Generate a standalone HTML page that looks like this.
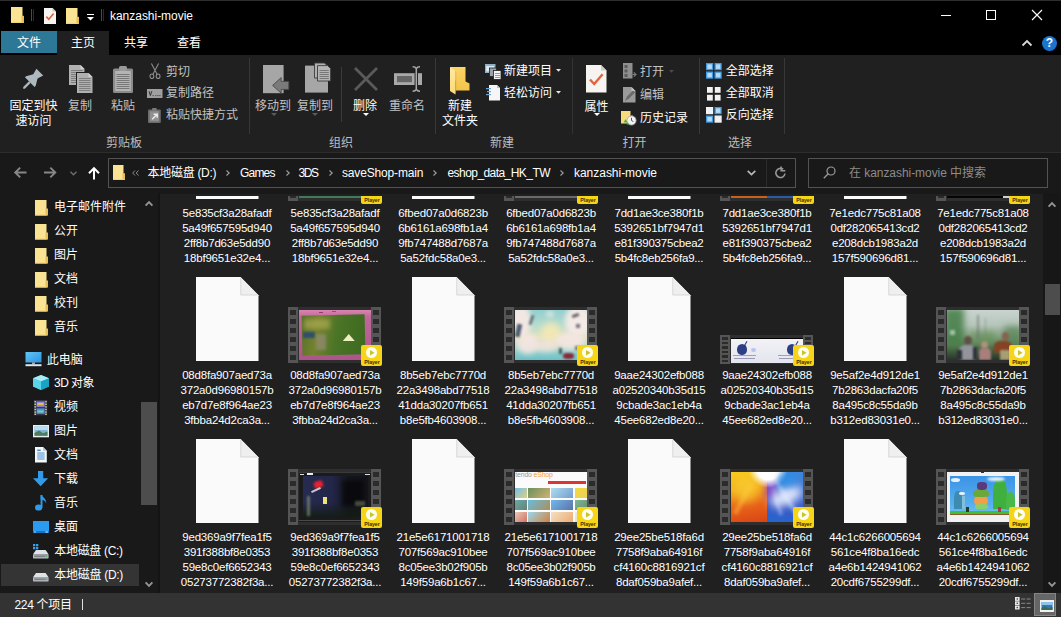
<!DOCTYPE html><html lang="zh-CN"><head><meta charset="utf-8"><title>kanzashi-movie</title><style>
html,body{margin:0;padding:0;}
body{width:1061px;height:617px;overflow:hidden;background:#202020;position:relative;
 font-family:"Liberation Sans","Noto Sans CJK SC",sans-serif;font-size:12px;color:#fff;}
.a{position:absolute;}
.t{position:absolute;white-space:nowrap;line-height:16px;height:16px;}
.g{color:#c2c2c2;}
.fn{position:absolute;width:108px;text-align:center;white-space:nowrap;line-height:15px;font-size:11.5px;letter-spacing:-0.2px;color:#fff;}
svg{position:absolute;overflow:visible;}
</style></head><body>
<div class="a" style="left:0px;top:0px;width:1061px;height:55px;background:#000;"></div>
<div class="a" style="left:0px;top:0px;width:1061px;height:1px;background:#2e2e2e;"></div>
<div class="a" style="left:0px;top:55px;width:1061px;height:97px;background:#202020;"></div>
<div class="a" style="left:0px;top:152px;width:1061px;height:1px;background:#2d2d2d;"></div>
<div class="a" style="left:0px;top:153px;width:1061px;height:41px;background:#191919;"></div>
<div class="a" style="left:0px;top:193px;width:159px;height:400px;background:#191919;"></div>
<div class="a" style="left:159px;top:194px;width:884px;height:399px;background:#202020;"></div>
<div class="a" style="left:1043px;top:193px;width:18px;height:400px;background:#171717;"></div>
<div class="a" style="left:0px;top:593px;width:1061px;height:24px;background:#333333;"></div>
<svg style="left:11px;top:7px" width="13" height="16" viewBox="0 0 13 16"><rect x="0" y="0" width="11.5" height="16" fill="#fbe394"/><rect x="10.5" y="8.8" width="2.5" height="7.2" fill="#e9bf55"/><rect x="0" y="15" width="11.5" height="1" fill="#f3d374"/></svg>
<div class="a" style="left:31px;top:9px;width:1px;height:12px;background:#4a4a4a;"></div>
<div class="a" style="left:33px;top:9px;width:1px;height:12px;background:#2a2a2a;"></div>
<svg style="left:44px;top:8px" width="12" height="16" viewBox="0 0 12 16"><path d="M0 0H8.5L12 3.5V16H0Z" fill="#f7f3f0"/><path d="M8.5 0V3.5H12Z" fill="#c9c4c0"/><path d="M2.3 8.6L4.8 11.2L9.6 5.6" fill="none" stroke="#e0623a" stroke-width="1.6"/></svg>
<svg style="left:66px;top:8px" width="13" height="16" viewBox="0 0 13 16"><rect x="0" y="0" width="11.5" height="16" fill="#fbe394"/><rect x="10.5" y="8.8" width="2.5" height="7.2" fill="#e9bf55"/><rect x="0" y="15" width="11.5" height="1" fill="#f3d374"/></svg>
<div class="a" style="left:87px;top:14px;width:7px;height:1px;background:#fff;"></div>
<svg style="left:87px;top:17px" width="7" height="4" viewBox="0 0 7 4"><path d="M0 0H7L3.5 3.6Z" fill="#fff"/></svg>
<div class="a" style="left:101px;top:9px;width:1px;height:12px;background:#4a4a4a;"></div>
<div class="a" style="left:103px;top:9px;width:1px;height:12px;background:#2a2a2a;"></div>
<span id="t0" class="t " style="left:110px;top:7.5px;letter-spacing:-0.029px;">kanzashi-movie</span>
<div class="a" style="left:941px;top:15px;width:10px;height:1px;background:#fff;"></div>
<div class="a" style="left:986px;top:10px;width:8px;height:8px;border:1px solid #fff"></div>
<svg style="left:1032px;top:10px" width="10" height="10" viewBox="0 0 10 10"><path d="M0 0L10 10M10 0L0 10" stroke="#fff" stroke-width="1.1" fill="none"/></svg>
<div class="a" style="left:1px;top:31px;width:56px;height:22px;background:#2c7896;"></div>
<div class="a" style="left:57px;top:31px;width:52px;height:24px;background:#202020;"></div>
<span id="t1" class="t " style="left:17px;top:35px;">文件</span>
<span id="t2" class="t " style="left:71px;top:35px;">主页</span>
<span id="t3" class="t " style="left:124px;top:35px;">共享</span>
<span id="t4" class="t " style="left:177px;top:35px;">查看</span>
<svg style="left:1022px;top:40px" width="10" height="6" viewBox="0 0 10 6"><path d="M0.5 5.5L5 1L9.5 5.5" stroke="#d8d8d8" stroke-width="1.8" fill="none"/></svg>
<div class="a" style="left:1041.5px;top:35.5px;width:15px;height:15px;border-radius:50%;background:#1b74cf;"></div>
<span id="t5" class="t " style="left:1045.7px;top:35px;font-weight:bold;font-size:12px;color:#fff;">?</span>
<svg style="left:0px;top:0px" width="1" height="1" viewBox="0 0 1 1"><g transform="translate(39.8,72.1) rotate(45)" fill="#adb9bf"><path d="M-4.8 0H4.8L3 6.2L6.8 12.6V14.2H-6.8V12.6L-3 6.2Z"/><path d="M-1.1 14.2H1.1V22.3L0 23.6L-1.1 22.3Z"/></g></svg>
<span id="t6" class="t " style="left:9.5px;top:98.2px;">固定到快</span>
<span id="t7" class="t " style="left:15.5px;top:113.2px;">速访问</span>
<svg style="left:69px;top:65px" width="15.5" height="20" viewBox="0 0 15.5 20"><path d="M0 0H11.5L15.5 4V20H0Z" fill="#b0b0b0"/><path d="M11.5 0V4H15.5Z" fill="#d0d0d0"/><rect x="2" y="5" width="11.5" height="1" fill="#7e7e7e"/><rect x="2" y="7" width="11.5" height="1" fill="#7e7e7e"/><rect x="2" y="9" width="11.5" height="1" fill="#7e7e7e"/><rect x="2" y="11" width="11.5" height="1" fill="#7e7e7e"/><rect x="2" y="13" width="11.5" height="1" fill="#7e7e7e"/><rect x="2" y="15" width="11.5" height="1" fill="#7e7e7e"/><rect x="2" y="17" width="11.5" height="1" fill="#7e7e7e"/></svg>
<svg style="left:77.3px;top:73px" width="15.5" height="20" viewBox="0 0 15.5 20"><rect x="-1" y="-1" width="17.5" height="22" fill="#202020"/><path d="M0 0H11.5L15.5 4V20H0Z" fill="#b0b0b0"/><path d="M11.5 0V4H15.5Z" fill="#d0d0d0"/><rect x="2" y="5" width="11.5" height="1" fill="#7e7e7e"/><rect x="2" y="7" width="11.5" height="1" fill="#7e7e7e"/><rect x="2" y="9" width="11.5" height="1" fill="#7e7e7e"/><rect x="2" y="11" width="11.5" height="1" fill="#7e7e7e"/><rect x="2" y="13" width="11.5" height="1" fill="#7e7e7e"/><rect x="2" y="15" width="11.5" height="1" fill="#7e7e7e"/><rect x="2" y="17" width="11.5" height="1" fill="#7e7e7e"/></svg>
<span id="t8" class="t g" style="left:68px;top:98.2px;">复制</span>
<svg style="left:113px;top:66px" width="20" height="27" viewBox="0 0 20 27"><rect x="0" y="2.5" width="20" height="24.5" rx="1.5" fill="#8b8b8b"/><rect x="6" y="0" width="8" height="5" rx="1.5" fill="#9a9a9a"/><rect x="2.2" y="5" width="15.6" height="20" fill="#b4b4b4"/><rect x="3.5" y="8" width="13" height="1" fill="#777"/><rect x="3.5" y="10" width="13" height="1" fill="#777"/><rect x="3.5" y="12" width="13" height="1" fill="#777"/><rect x="3.5" y="14" width="13" height="1" fill="#777"/><rect x="3.5" y="16" width="13" height="1" fill="#777"/><rect x="3.5" y="18" width="13" height="1" fill="#777"/><rect x="3.5" y="20" width="13" height="1" fill="#777"/><rect x="3.5" y="22" width="13" height="1" fill="#777"/></svg>
<span id="t9" class="t g" style="left:111px;top:98.2px;">粘贴</span>
<svg style="left:149px;top:63px" width="12" height="16" viewBox="0 0 12 16"><g fill="none" stroke="#8e8e8e" stroke-width="1.05"><path d="M2.4 0.5L8.2 11.4M9.6 0.5L3.8 11.4"/><ellipse cx="2.9" cy="13.2" rx="1.9" ry="2.3"/><ellipse cx="9.1" cy="13.2" rx="1.9" ry="2.3"/></g></svg>
<span id="t10" class="t g" style="left:166px;top:63.5px;">剪切</span>
<svg style="left:146.5px;top:88.5px" width="15.5" height="9" viewBox="0 0 15.5 9"><rect width="15.5" height="9" fill="#9f9f9f"/><path d="M2 2.2L3.4 6.6L4.8 2.2M5.6 6.6H6.6M8.4 6.6H9.4M10.4 6.6H11.4M12.4 6.6H13.4" stroke="#333" stroke-width="1" fill="none"/></svg>
<span id="t11" class="t g" style="left:166px;top:85.2px;">复制路径</span>
<svg style="left:148.2px;top:107.8px" width="12.8" height="15" viewBox="0 0 12.8 15"><rect x="0" y="1.4" width="12.8" height="13.6" rx="1" fill="#6b6b6b"/><rect x="4" y="0" width="4.8" height="2.8" rx="1" fill="#7a7a7a"/><rect x="1.7" y="3.2" width="9.4" height="10.2" fill="#8f8f8f"/><path d="M4.2 11.2L8.6 6.8M5.6 6.2H9.2V9.8" stroke="#ececec" stroke-width="1.5" fill="none"/></svg>
<span id="t12" class="t g" style="left:166px;top:107.2px;">粘贴快捷方式</span>
<span id="t13" class="t g" style="left:106px;top:134.5px;color:#bdbdbd;">剪贴板</span>
<div class="a" style="left:248.5px;top:58px;width:1px;height:76px;background:#383838;"></div>
<svg style="left:263.4px;top:64.8px" width="26" height="28.4" viewBox="0 0 26 28.4"><path d="M0 0H20.6V28.2H0Z" fill="#a6a6a6"/><path d="M25.8 16.4H18.2V12.6L9.6 20.4L18.2 28.2V24.4H25.8Z" fill="#7a7a7a" stroke="#4a4a4a" stroke-width="0.9"/></svg>
<span id="t14" class="t g" style="left:255px;top:98.2px;">移动到</span>
<svg style="left:271px;top:113px" width="6" height="3" viewBox="0 0 6 3"><path d="M0 0H6L3 3Z" fill="#5a5a5a"/></svg>
<svg style="left:305px;top:63.4px" width="26" height="30" viewBox="0 0 26 30"><path d="M0 2.6H23V29.6H0Z" fill="#a6a6a6"/><path d="M9.5 0H19.5L22.5 3V15H9.5Z" fill="#b0b0b0" stroke="#3a3a3a" stroke-width="0.9"/><path d="M12.5 2.6H22.6L25.6 5.6V18H12.5Z" fill="#b4b4b4" stroke="#3a3a3a" stroke-width="0.9"/><rect x="14.5" y="7" width="9.3" height="1" fill="#777"/><rect x="14.5" y="9" width="9.3" height="1" fill="#777"/><rect x="14.5" y="11" width="9.3" height="1" fill="#777"/><rect x="14.5" y="13" width="9.3" height="1" fill="#777"/><rect x="14.5" y="15" width="9.3" height="1" fill="#777"/></svg>
<span id="t15" class="t g" style="left:297px;top:98.2px;">复制到</span>
<svg style="left:312px;top:113px" width="6" height="3" viewBox="0 0 6 3"><path d="M0 0H6L3 3Z" fill="#5a5a5a"/></svg>
<div class="a" style="left:341px;top:67px;width:1px;height:55px;background:#3a3a3a;"></div>
<svg style="left:354px;top:67px" width="24" height="24" viewBox="0 0 24 24"><path d="M1 1L23 23M23 1L1 23" stroke="#5a5a5a" stroke-width="2.8" fill="none"/></svg>
<span id="t16" class="t " style="left:353px;top:98.2px;">删除</span>
<svg style="left:362.5px;top:113px" width="6" height="3" viewBox="0 0 6 3"><path d="M0 0H6L3 3Z" fill="#fff"/></svg>
<svg style="left:394px;top:66px" width="28" height="26" viewBox="0 0 28 26"><rect x="0" y="7.2" width="28" height="11.8" fill="#a9a9a9"/><rect x="3" y="10" width="15" height="6.2" fill="#666"/><rect x="20.6" y="7.2" width="3.4" height="11.8" fill="#202020"/><path d="M18.6 0.8Q21.4 0.8 22.3 2.6Q23.2 0.8 26 0.8M22.3 2.6V23.4M18.6 25.2Q21.4 25.2 22.3 23.4Q23.2 25.2 26 25.2" stroke="#a9a9a9" stroke-width="1.5" fill="none"/></svg>
<span id="t17" class="t g" style="left:389px;top:98.2px;">重命名</span>
<span id="t18" class="t g" style="left:329px;top:134.5px;color:#bdbdbd;">组织</span>
<div class="a" style="left:435px;top:58px;width:1px;height:76px;background:#383838;"></div>
<svg style="left:449.5px;top:66.5px" width="19.5" height="28" viewBox="0 0 19.5 28"><defs><linearGradient id="nf1" x1="0" y1="0" x2="0" y2="1"><stop offset="0" stop-color="#fbd467"/><stop offset="1" stop-color="#f3c349"/></linearGradient><linearGradient id="nf2" x1="0" y1="0" x2="0" y2="1"><stop offset="0" stop-color="#ffe9a3"/><stop offset="1" stop-color="#fbd978"/></linearGradient></defs><path d="M0 0H15.5V14.5L19.5 16.5V23.5H5.5V14Z" fill="url(#nf1)"/><path d="M0 0L5.5 4V27.5L0 24Z" fill="url(#nf2)"/><path d="M5.5 4V27.5L6.2 23.5V4.6Z" fill="#d9a93a"/></svg>
<span id="t19" class="t " style="left:448px;top:98.2px;">新建</span>
<span id="t20" class="t " style="left:442px;top:113.2px;">文件夹</span>
<svg style="left:485px;top:63.5px" width="16" height="15.5" viewBox="0 0 16 15.5"><rect x="0" y="0" width="10.5" height="9" fill="#8fb1c6"/><rect x="1.2" y="2" width="8" height="5.5" fill="#dfeaf2"/><rect x="4.5" y="4" width="7" height="8.5" fill="#9aa3aa" stroke="#202020" stroke-width="0.8"/><rect x="8.5" y="6.5" width="7.5" height="9" fill="#f4f4f4" stroke="#202020" stroke-width="0.8"/><rect x="10" y="9" width="5" height="1" fill="#9a9a9a"/><rect x="10" y="11" width="5" height="1" fill="#9a9a9a"/><rect x="10" y="13" width="5" height="1" fill="#9a9a9a"/></svg>
<span id="t21" class="t " style="left:504px;top:63px;">新建项目</span>
<svg style="left:556px;top:68.6px" width="5" height="3" viewBox="0 0 5 3"><path d="M0 0H5L2.5 2.8Z" fill="#e6e6e6"/></svg>
<svg style="left:486px;top:85px" width="14" height="15.5" viewBox="0 0 14 15.5"><path d="M3 0H11L14 3V15.5H3Z" fill="#f4f6f8"/><path d="M11 0V3H14Z" fill="#b8c2cc"/><rect x="0" y="3" width="5" height="1.2" fill="#6fa5d8"/><rect x="1" y="6" width="4" height="1.2" fill="#6fa5d8"/><rect x="0" y="9" width="5" height="1.2" fill="#6fa5d8"/></svg>
<span id="t22" class="t " style="left:504px;top:85px;">轻松访问</span>
<svg style="left:556px;top:90.5px" width="5" height="3" viewBox="0 0 5 3"><path d="M0 0H5L2.5 2.8Z" fill="#e6e6e6"/></svg>
<span id="t23" class="t g" style="left:490px;top:134.5px;color:#bdbdbd;">新建</span>
<div class="a" style="left:571.5px;top:58px;width:1px;height:76px;background:#333;"></div>
<svg style="left:586px;top:65px" width="20.5" height="27.5" viewBox="0 0 20.5 27.5"><path d="M0 0H15L20.5 5.5V27.5H0Z" fill="#f6f3f1"/><path d="M15 0V5.5H20.5Z" fill="#cfcac6"/><path d="M4 14.5L8.2 19L16.6 9.2" fill="none" stroke="#e3633a" stroke-width="2.4"/></svg>
<span id="t24" class="t " style="left:584.5px;top:98.5px;">属性</span>
<svg style="left:594.2px;top:113.3px" width="6" height="3" viewBox="0 0 6 3"><path d="M0 0H6L3 3Z" fill="#fff"/></svg>
<svg style="left:623px;top:63px" width="13" height="15.5" viewBox="0 0 13 15.5"><rect x="0" y="0" width="9.5" height="15.5" fill="#8f8f8f"/><rect x="1.5" y="2" width="3" height="3" fill="#5c5c5c"/><rect x="1.5" y="6.5" width="3" height="3" fill="#5c5c5c"/><rect x="1.5" y="11" width="3" height="3" fill="#5c5c5c"/><path d="M8 11.5H13M10.8 9.3L13 11.5L10.8 13.7" stroke="#7a7a7a" stroke-width="1.2" fill="none"/></svg>
<span id="t25" class="t g" style="left:640px;top:64px;">打开</span>
<svg style="left:668.6px;top:69.6px" width="5" height="3" viewBox="0 0 5 3"><path d="M0 0H5L2.5 2.8Z" fill="#4c4c4c"/></svg>
<svg style="left:623px;top:86.5px" width="12.5" height="15.5" viewBox="0 0 12.5 15.5"><path d="M0 0H8.5L12.5 4V15.5H0Z" fill="#9a9a9a"/><path d="M8.5 0V4H12.5Z" fill="#c4c4c4"/><path d="M2 14L4 9.5L10 3.5L12 5.5L6 11.5Z" fill="#6a6a6a"/></svg>
<span id="t26" class="t g" style="left:640px;top:87px;">编辑</span>
<svg style="left:621px;top:110px" width="15.5" height="15.5" viewBox="0 0 15.5 15.5"><path d="M0 1H9.5V13.5H0Z" fill="#f7dc7e"/><path d="M9.5 5.5H12V13.5H9.5Z" fill="#e4b94f"/><circle cx="10.5" cy="10.5" r="4.6" fill="#f3f3f3" stroke="#9aa0a6" stroke-width="0.8"/><path d="M10.5 7.8V10.5L12.4 11.6" stroke="#444" stroke-width="0.9" fill="none"/><path d="M3.5 10.8A4.6 4.6 0 0 0 8 14.8L7 12.4L4.2 13.2Z" fill="#3fae49"/><path d="M4.6 9.2L2.6 12.2L6.4 12.4Z" fill="#3fae49"/></svg>
<span id="t27" class="t " style="left:640px;top:109.7px;">历史记录</span>
<span id="t28" class="t g" style="left:622.5px;top:134.5px;color:#bdbdbd;">打开</span>
<div class="a" style="left:698.5px;top:58px;width:1px;height:76px;background:#383838;"></div>
<svg style="left:706.3px;top:63px" width="15.7" height="15.7" viewBox="0 0 15.7 15.7"><rect x="0.65" y="0.65" width="5.9" height="5.9" fill="#b5daf7" stroke="#3f9be3" stroke-width="1.3"/><rect x="0.65" y="9.15" width="5.9" height="5.9" fill="#b5daf7" stroke="#3f9be3" stroke-width="1.3"/><rect x="9.15" y="0.65" width="5.9" height="5.9" fill="#b5daf7" stroke="#3f9be3" stroke-width="1.3"/><rect x="9.15" y="9.15" width="5.9" height="5.9" fill="#b5daf7" stroke="#3f9be3" stroke-width="1.3"/></svg>
<span id="t29" class="t " style="left:725.7px;top:63px;">全部选择</span>
<svg style="left:707.3px;top:86.5px" width="13.6" height="13.6" viewBox="0 0 13.6 13.6"><rect x="0" y="0" width="5.8" height="5.8" fill="#f2f2f2"/><rect x="0" y="7.8" width="5.8" height="5.8" fill="#f2f2f2"/><rect x="7.8" y="0" width="5.8" height="5.8" fill="#f2f2f2"/><rect x="7.8" y="7.8" width="5.8" height="5.8" fill="#f2f2f2"/></svg>
<span id="t30" class="t " style="left:725.7px;top:85.2px;">全部取消</span>
<svg style="left:706.3px;top:107px" width="15.7" height="15.7" viewBox="0 0 15.7 15.7"><rect x="0.65" y="0.65" width="5.9" height="5.9" fill="#f2f2f2" stroke="#f2f2f2" stroke-width="1.3"/><rect x="0.65" y="9.15" width="5.9" height="5.9" fill="#b5daf7" stroke="#3f9be3" stroke-width="1.3"/><rect x="9.15" y="0.65" width="5.9" height="5.9" fill="#b5daf7" stroke="#3f9be3" stroke-width="1.3"/><rect x="9.15" y="9.15" width="5.9" height="5.9" fill="#f2f2f2" stroke="#f2f2f2" stroke-width="1.3"/></svg>
<span id="t31" class="t " style="left:725.7px;top:107.2px;">反向选择</span>
<span id="t32" class="t g" style="left:728px;top:134.5px;color:#bdbdbd;">选择</span>
<div class="a" style="left:783.5px;top:58px;width:1px;height:76px;background:#383838;"></div>
<svg style="left:13.5px;top:167px" width="13" height="11" viewBox="0 0 13 11"><path d="M12.5 5.5H1.2M6.2 0.6L1.2 5.5L6.2 10.4" stroke="#878787" stroke-width="1.9" fill="none"/></svg>
<svg style="left:43.5px;top:167px" width="13" height="11" viewBox="0 0 13 11"><path d="M0 5.5H11.3M6.3 0.6L11.3 5.5L6.3 10.4" stroke="#878787" stroke-width="1.9" fill="none"/></svg>
<svg style="left:69.5px;top:170.5px" width="7" height="5" viewBox="0 0 7 5"><path d="M0.5 0.7L3.5 3.7L6.5 0.7" stroke="#6e6e6e" stroke-width="1.4" fill="none"/></svg>
<svg style="left:88px;top:166.5px" width="12" height="13" viewBox="0 0 12 13"><path d="M6 12.5V1.3M1 6.2L6 1.2L11 6.2" stroke="#fff" stroke-width="2" fill="none"/></svg>
<div class="a" style="left:107.5px;top:158px;width:686.5px;height:28px;border:1px solid #535353;background:#191919"></div>
<svg style="left:113px;top:164.5px" width="12" height="15" viewBox="0 0 12 15"><rect x="0" y="0" width="10.5" height="15" fill="#fbe394"/><rect x="9.5" y="8.25" width="2.5" height="6.75" fill="#e9bf55"/><rect x="0" y="14" width="10.5" height="1" fill="#f3d374"/></svg>
<svg style="left:132px;top:169.5px" width="7" height="6" viewBox="0 0 7 6"><path d="M3 0.5L0.7 3L3 5.5M6.5 0.5L4.2 3L6.5 5.5" stroke="#8a8a8a" stroke-width="1" fill="none"/></svg>
<span id="t33" class="t " style="left:147.5px;top:164.5px;letter-spacing:-0.291px;">本地磁盘 (D:)</span>
<svg style="left:226px;top:170px" width="4" height="6" viewBox="0 0 4 6"><path d="M0.5 0.5L3.2 3L0.5 5.5" stroke="#a0a0a0" stroke-width="1.1" fill="none"/></svg>
<span id="t34" class="t " style="left:240px;top:164.5px;letter-spacing:-0.797px;">Games</span>
<svg style="left:285.7px;top:170px" width="4" height="6" viewBox="0 0 4 6"><path d="M0.5 0.5L3.2 3L0.5 5.5" stroke="#a0a0a0" stroke-width="1.1" fill="none"/></svg>
<span id="t35" class="t " style="left:298.6px;top:164.5px;letter-spacing:-1.422px;">3DS</span>
<svg style="left:328.8px;top:170px" width="4" height="6" viewBox="0 0 4 6"><path d="M0.5 0.5L3.2 3L0.5 5.5" stroke="#a0a0a0" stroke-width="1.1" fill="none"/></svg>
<span id="t36" class="t " style="left:342px;top:164.5px;letter-spacing:-0.158px;">saveShop-main</span>
<svg style="left:432.6px;top:170px" width="4" height="6" viewBox="0 0 4 6"><path d="M0.5 0.5L3.2 3L0.5 5.5" stroke="#a0a0a0" stroke-width="1.1" fill="none"/></svg>
<span id="t37" class="t " style="left:447.5px;top:164.5px;letter-spacing:-0.560px;">eshop_data_HK_TW</span>
<svg style="left:560px;top:170px" width="4" height="6" viewBox="0 0 4 6"><path d="M0.5 0.5L3.2 3L0.5 5.5" stroke="#a0a0a0" stroke-width="1.1" fill="none"/></svg>
<span id="t38" class="t " style="left:574px;top:164.5px;letter-spacing:-0.029px;">kanzashi-movie</span>
<svg style="left:747px;top:170px" width="9" height="6" viewBox="0 0 9 6"><path d="M0.7 0.8L4.5 4.6L8.3 0.8" stroke="#b8b8b8" stroke-width="1.7" fill="none"/></svg>
<div class="a" style="left:765.5px;top:159px;width:1px;height:28px;background:#2c2c2c;"></div>
<svg style="left:775px;top:166.5px" width="11" height="12" viewBox="0 0 11 12"><path d="M8.2 2.2A4.6 4.6 0 1 0 10 6.5" stroke="#9a9a9a" stroke-width="1.5" fill="none"/><path d="M5.8 0V4.3H10" stroke="#9a9a9a" stroke-width="1.5" fill="none" transform="translate(0.3,-0.6)"/></svg>
<div class="a" style="left:808px;top:158px;width:238px;height:28px;border:1px solid #535353;background:#191919"></div>
<svg style="left:823px;top:166px" width="13" height="13" viewBox="0 0 13 13"><circle cx="8" cy="5" r="4" stroke="#9a9a9a" stroke-width="1.2" fill="none"/><path d="M5.2 7.8L0.8 12.2" stroke="#9a9a9a" stroke-width="1.3"/></svg>
<span id="t39" class="t " style="left:849px;top:164.5px;letter-spacing:-0.055px;color:#8c8c8c;">在 kanzashi-movie 中搜索</span>
<div class="a" style="left:158px;top:193px;width:1.5px;height:400px;background:#141414;"></div>
<svg style="left:35px;top:199.7px" width="13" height="15.5" viewBox="0 0 13 15.5"><rect x="0" y="0" width="11.5" height="15.5" fill="#fbe394"/><rect x="10.5" y="8.525" width="2.5" height="6.975" fill="#e9bf55"/><rect x="0" y="14.5" width="11.5" height="1" fill="#f3d374"/></svg>
<span id="t40" class="t " style="left:54px;top:199.2px;">电子邮件附件</span>
<svg style="left:35px;top:223.7px" width="13" height="15.5" viewBox="0 0 13 15.5"><rect x="0" y="0" width="11.5" height="15.5" fill="#fbe394"/><rect x="10.5" y="8.525" width="2.5" height="6.975" fill="#e9bf55"/><rect x="0" y="14.5" width="11.5" height="1" fill="#f3d374"/></svg>
<span id="t41" class="t " style="left:54px;top:223.2px;">公开</span>
<svg style="left:35px;top:247.7px" width="13" height="15.5" viewBox="0 0 13 15.5"><rect x="0" y="0" width="11.5" height="15.5" fill="#fbe394"/><rect x="10.5" y="8.525" width="2.5" height="6.975" fill="#e9bf55"/><rect x="0" y="14.5" width="11.5" height="1" fill="#f3d374"/></svg>
<span id="t42" class="t " style="left:54px;top:247.2px;">图片</span>
<svg style="left:35px;top:271.7px" width="13" height="15.5" viewBox="0 0 13 15.5"><rect x="0" y="0" width="11.5" height="15.5" fill="#fbe394"/><rect x="10.5" y="8.525" width="2.5" height="6.975" fill="#e9bf55"/><rect x="0" y="14.5" width="11.5" height="1" fill="#f3d374"/></svg>
<span id="t43" class="t " style="left:54px;top:271.2px;">文档</span>
<svg style="left:35px;top:295.7px" width="13" height="15.5" viewBox="0 0 13 15.5"><rect x="0" y="0" width="11.5" height="15.5" fill="#fbe394"/><rect x="10.5" y="8.525" width="2.5" height="6.975" fill="#e9bf55"/><rect x="0" y="14.5" width="11.5" height="1" fill="#f3d374"/></svg>
<span id="t44" class="t " style="left:54px;top:295.2px;">校刊</span>
<svg style="left:35px;top:319.7px" width="13" height="15.5" viewBox="0 0 13 15.5"><rect x="0" y="0" width="11.5" height="15.5" fill="#fbe394"/><rect x="10.5" y="8.525" width="2.5" height="6.975" fill="#e9bf55"/><rect x="0" y="14.5" width="11.5" height="1" fill="#f3d374"/></svg>
<span id="t45" class="t " style="left:54px;top:319.2px;">音乐</span>
<svg style="left:144.5px;top:201px" width="8" height="5" viewBox="0 0 8 5"><path d="M0.6 4.6L4 1.2L7.4 4.6" stroke="#959595" stroke-width="1.9" fill="none"/></svg>
<svg style="left:144.5px;top:582px" width="8" height="5" viewBox="0 0 8 5"><path d="M0.6 0.4L4 3.8L7.4 0.4" stroke="#959595" stroke-width="1.9" fill="none"/></svg>
<div class="a" style="left:141px;top:402px;width:15.5px;height:103px;background:#4d4d4d;"></div>
<div class="a" style="left:1px;top:564px;width:138px;height:22px;background:#343434;"></div>
<svg style="left:24.5px;top:352px" width="17" height="14.5" viewBox="0 0 17 14.5"><defs><linearGradient id="pc" x1="0" y1="0" x2="1" y2="1"><stop offset="0" stop-color="#63c6f5"/><stop offset="1" stop-color="#2d93e0"/></linearGradient></defs><rect x="0.5" y="0" width="16" height="10.5" fill="url(#pc)"/><rect x="7" y="10.5" width="3" height="1.8" fill="#9fb0bc"/><rect x="0.5" y="12.2" width="16" height="2" fill="#dde5ea"/></svg>
<span id="t46" class="t " style="left:46.8px;top:351.8px;">此电脑</span>
<svg style="left:33px;top:375px" width="16" height="15" viewBox="0 0 16 15"><path d="M8 0L16 3.2V11.5L8 15L0 11.5V3.2Z" fill="#35c3de"/><path d="M8 0L16 3.2L8 6.4L0 3.2Z" fill="#a8eaf6"/><path d="M8 6.4V15L0 11.5V3.2Z" fill="#5ad4ea"/><path d="M8 6.4V15L16 11.5V3.2Z" fill="#1ba3c4"/></svg>
<span id="t47" class="t " style="left:54px;top:375.1px;letter-spacing:-0.547px;">3D 对象</span>
<svg style="left:34.3px;top:399.7px" width="13.2" height="15.3" viewBox="0 0 13.2 15.3"><rect width="13.2" height="15.3" fill="#3a3a4a"/><rect x="2.6" y="1.5" width="8" height="5.4" fill="#9a86d8"/><rect x="2.6" y="8.4" width="8" height="5.4" fill="#4f8fdf"/><rect x="3.5" y="3" width="6" height="2" fill="#d9c64a"/><rect x="3.5" y="10.5" width="6" height="2" fill="#7fd0a0"/><rect x="0.5" y="1" width="1.4" height="1.4" fill="#d9d9a0"/><rect x="0.5" y="3.6" width="1.4" height="1.4" fill="#d9d9a0"/><rect x="0.5" y="6.2" width="1.4" height="1.4" fill="#d9d9a0"/><rect x="0.5" y="8.8" width="1.4" height="1.4" fill="#d9d9a0"/><rect x="0.5" y="11.4" width="1.4" height="1.4" fill="#d9d9a0"/><rect x="0.5" y="13.6" width="1.4" height="1.4" fill="#d9d9a0"/><rect x="11.3" y="1" width="1.4" height="1.4" fill="#d9d9a0"/><rect x="11.3" y="3.6" width="1.4" height="1.4" fill="#d9d9a0"/><rect x="11.3" y="6.2" width="1.4" height="1.4" fill="#d9d9a0"/><rect x="11.3" y="8.8" width="1.4" height="1.4" fill="#d9d9a0"/><rect x="11.3" y="11.4" width="1.4" height="1.4" fill="#d9d9a0"/><rect x="11.3" y="13.6" width="1.4" height="1.4" fill="#d9d9a0"/></svg>
<span id="t48" class="t " style="left:54px;top:399.2px;">视频</span>
<svg style="left:33px;top:425px" width="16" height="12.3" viewBox="0 0 16 12.3"><rect width="16" height="12.3" fill="#e9eef2"/><rect x="1.5" y="1.5" width="13" height="9.3" fill="#7fb6d8"/><path d="M1.5 8L6 5.5L10 8.2L14.5 6.5V10.8H1.5Z" fill="#4d7c5a"/><rect x="1.5" y="1.5" width="13" height="3.5" fill="#bcdcf0"/></svg>
<span id="t49" class="t " style="left:54px;top:423.3px;">图片</span>
<svg style="left:35.3px;top:447.3px" width="11.8" height="15.4" viewBox="0 0 11.8 15.4"><path d="M0 0H8L11.8 3.8V15.4H0Z" fill="#f4f6f8"/><path d="M8 0V3.8H11.8Z" fill="#b9c4ce"/><rect x="2.2" y="5.5" width="7.4" height="1" fill="#4b8fd0"/><rect x="2.2" y="7.5" width="7.4" height="1" fill="#4b8fd0"/><rect x="2.2" y="9.5" width="7.4" height="1" fill="#4b8fd0"/><rect x="2.2" y="11.5" width="7.4" height="1" fill="#4b8fd0"/><rect x="2.2" y="2.5" width="3.5" height="1.6" fill="#4b8fd0"/></svg>
<span id="t50" class="t " style="left:54px;top:447.2px;">文档</span>
<svg style="left:33.3px;top:471.4px" width="15.2" height="15.2" viewBox="0 0 15.2 15.2"><path d="M5 0H10.2V7.2H15.2L7.6 15.2L0 7.2H5Z" fill="#2f9bea"/></svg>
<span id="t51" class="t " style="left:54px;top:471.2px;">下载</span>
<svg style="left:35px;top:495px" width="11.5" height="15.8" viewBox="0 0 11.5 15.8"><ellipse cx="3.6" cy="12.6" rx="3.6" ry="3" fill="#2f9bea"/><rect x="5.6" y="0" width="1.9" height="12.8" fill="#2f9bea"/><path d="M5.6 0C8 2.2 11.4 3.6 11.2 8.4C10.2 5.6 8.2 5 5.6 4.6Z" fill="#2f9bea"/></svg>
<span id="t52" class="t " style="left:54px;top:495.2px;">音乐</span>
<svg style="left:33px;top:521px" width="16" height="12" viewBox="0 0 16 12"><rect width="16" height="12" fill="#2b9bf0"/><rect x="0" y="10" width="16" height="2" fill="#1674c8"/><rect x="1.2" y="10.5" width="1.6" height="1" fill="#d8ecfb"/><rect x="12.5" y="10.5" width="2.4" height="1" fill="#d8ecfb"/></svg>
<span id="t53" class="t " style="left:54px;top:519.2px;">桌面</span>
<svg style="left:33px;top:550px" width="15.6" height="8.4" viewBox="0 0 15.6 8.4"><rect x="0" y="-6" width="2.3" height="2.3" fill="#39a0ee"/><rect x="3" y="-6" width="2.3" height="2.3" fill="#39a0ee"/><rect x="0" y="-3" width="2.3" height="2.3" fill="#39a0ee"/><rect x="3" y="-3" width="2.3" height="2.3" fill="#39a0ee"/><path d="M3 0H12.6L15.6 4.2H0Z" fill="#dfe3e6"/><rect x="0" y="4.2" width="15.6" height="4.2" rx="0.6" fill="#b7bcc1"/><rect x="1.2" y="5.4" width="13.2" height="1.8" fill="#7b8187"/><rect x="11.8" y="5.7" width="1.8" height="1.2" fill="#4fd66a"/></svg>
<span id="t54" class="t " style="left:54.3px;top:543.2px;letter-spacing:-0.316px;">本地磁盘 (C:)</span>
<svg style="left:33px;top:573.3px" width="15.6" height="8.4" viewBox="0 0 15.6 8.4"><path d="M3 0H12.6L15.6 4.2H0Z" fill="#dfe3e6"/><rect x="0" y="4.2" width="15.6" height="4.2" rx="0.6" fill="#b7bcc1"/><rect x="1.2" y="5.4" width="13.2" height="1.8" fill="#7b8187"/><rect x="11.8" y="5.7" width="1.8" height="1.2" fill="#4fd66a"/></svg>
<span id="t55" class="t " style="left:54.3px;top:567px;letter-spacing:-0.291px;">本地磁盘 (D:)</span>
<span id="t56" class="t " style="left:14.5px;top:597px;letter-spacing:-0.310px;">224 个项目</span>
<div class="a" style="left:82px;top:599px;width:1px;height:11px;background:#e0e0e0;"></div>
<svg style="left:1015.3px;top:597.2px" width="16" height="12.6" viewBox="0 0 16 12.6"><rect x="0" y="0" width="4.6" height="3.9" fill="#e6e6e6"/><rect x="1.6" y="1.3" width="1.4" height="1.3" fill="#444"/><rect x="6.2" y="1.5" width="4" height="1" fill="#8a8a8a"/><rect x="11.6" y="1.5" width="4" height="1" fill="#8a8a8a"/><rect x="0" y="4.3" width="4.6" height="3.9" fill="#e6e6e6"/><rect x="1.6" y="5.6" width="1.4" height="1.3" fill="#444"/><rect x="6.2" y="5.8" width="4" height="1" fill="#8a8a8a"/><rect x="11.6" y="5.8" width="4" height="1" fill="#8a8a8a"/><rect x="0" y="8.6" width="4.6" height="3.9" fill="#e6e6e6"/><rect x="1.6" y="9.9" width="1.4" height="1.3" fill="#444"/><rect x="6.2" y="10.1" width="4" height="1" fill="#8a8a8a"/><rect x="11.6" y="10.1" width="4" height="1" fill="#8a8a8a"/></svg>
<div class="a" style="left:1034px;top:593px;width:20px;height:21px;border:1px solid #858585;background:#666"></div>
<svg style="left:1039.5px;top:599.5px" width="13" height="10" viewBox="0 0 13 10"><rect width="14" height="12" fill="#eef2f5"/><rect x="1.5" y="2" width="11" height="8" fill="#2f78c0"/><path d="M1.5 8L5 6L8.5 8.2L12.5 6.8V10H1.5Z" fill="#3f6a52"/><rect x="1.5" y="2" width="11" height="3" fill="#8fc2ea"/></svg>
<div class="a" style="left:1044.5px;top:284px;width:15px;height:31px;background:#4d4d4d;"></div>
<svg style="left:1047.5px;top:202px" width="8" height="5" viewBox="0 0 8 5"><path d="M0.6 4.6L4 1.2L7.4 4.6" stroke="#959595" stroke-width="1.9" fill="none"/></svg>
<svg style="left:1047.5px;top:582px" width="8" height="5" viewBox="0 0 8 5"><path d="M0.6 0.4L4 3.8L7.4 0.4" stroke="#959595" stroke-width="1.9" fill="none"/></svg>
<div class="a" style="left:159px;top:195.5px;width:884px;height:397.5px;overflow:hidden">
<svg style="left:36.75px;top:-80.5px" width="62.5" height="84" viewBox="0 0 62.5 84"><path d="M0 0H44.5L62.5 18.3V84H0Z" fill="#fafafa"/><path d="M44.5 0V18.3H62.5Z" fill="#efefef"/><path d="M44.8 1V18H61.5" stroke="#cdcdcd" stroke-width="0.7" fill="none"/></svg>
<div class="fn" style="left:14px;top:10.4px">5e835cf3a28afadf<br>5a49f657595d940<br>2ff8b7d63e5dd90<br>18bf9651e32e4...</div>
<div class="a" style="left:129.25px;top:-50.5px;width:92.75px;height:56px;background:#2e2e2e;overflow:hidden"><div class="a" style="left:0;top:0;width:10.2px;height:100%;background:#555"></div><div class="a" style="left:82.6px;top:0;width:10.2px;height:100%;background:#555"></div><div class="a" style="left:2.2px;top:3.0475px;width:6px;height:4.905px;background:#2b2b2b"></div><div class="a" style="left:84.6px;top:3.0475px;width:6px;height:4.905px;background:#2b2b2b"></div><div class="a" style="left:2.2px;top:12.0475px;width:6px;height:4.905px;background:#2b2b2b"></div><div class="a" style="left:84.6px;top:12.0475px;width:6px;height:4.905px;background:#2b2b2b"></div><div class="a" style="left:2.2px;top:21.0475px;width:6px;height:4.905px;background:#2b2b2b"></div><div class="a" style="left:84.6px;top:21.0475px;width:6px;height:4.905px;background:#2b2b2b"></div><div class="a" style="left:2.2px;top:30.0475px;width:6px;height:4.905px;background:#2b2b2b"></div><div class="a" style="left:84.6px;top:30.0475px;width:6px;height:4.905px;background:#2b2b2b"></div><div class="a" style="left:2.2px;top:39.0475px;width:6px;height:4.905px;background:#2b2b2b"></div><div class="a" style="left:84.6px;top:39.0475px;width:6px;height:4.905px;background:#2b2b2b"></div><div class="a" style="left:2.2px;top:48.0475px;width:6px;height:4.905px;background:#2b2b2b"></div><div class="a" style="left:84.6px;top:48.0475px;width:6px;height:4.905px;background:#2b2b2b"></div><div class="a" style="left:10.5px;top:3px;width:71.8px;height:50px;overflow:hidden;background:#888"><div class="a" style="left:0px;top:0px;width:72px;height:50px;background:#3f7a5a;"></div><div class="a" style="left:0px;top:44px;width:72px;height:3px;background:linear-gradient(90deg,#3f8a6a,#5fae8a 30%,#2f6a4a 60%,#3f7a5a);"></div></div></div>
<div class="a" style="left:202px;top:-12.5px;width:21.2px;height:21px;border-radius:2px;background:#f6d517"></div>
<div class="a" style="left:207.2px;top:-10.5px;width:10.6px;height:10.6px;border-radius:50%;background:#fffdf0"></div>
<svg style="left:211.1px;top:-7.9px" width="5" height="6" viewBox="0 0 5 6"><path d="M0 0L4.6 2.7L0 5.4Z" fill="#c6c628"/></svg>
<span class="a" style="left:202.4px;top:1.5px;width:21.2px;text-align:center;font-size:5.3px;line-height:6px;font-weight:bold;color:#3d3000;letter-spacing:-0.1px">Player</span>
<div class="fn" style="left:122px;top:10.4px">5e835cf3a28afadf<br>5a49f657595d940<br>2ff8b7d63e5dd90<br>18bf9651e32e4...</div>
<svg style="left:252.75px;top:-80.5px" width="62.5" height="84" viewBox="0 0 62.5 84"><path d="M0 0H44.5L62.5 18.3V84H0Z" fill="#fafafa"/><path d="M44.5 0V18.3H62.5Z" fill="#efefef"/><path d="M44.8 1V18H61.5" stroke="#cdcdcd" stroke-width="0.7" fill="none"/></svg>
<div class="fn" style="left:230px;top:10.4px">6fbed07a0d6823b<br>6b6161a698fb1a4<br>9fb747488d7687a<br>5a52fdc58a0e3...</div>
<div class="a" style="left:345.25px;top:-50.5px;width:92.75px;height:56px;background:#2e2e2e;overflow:hidden"><div class="a" style="left:0;top:0;width:10.2px;height:100%;background:#555"></div><div class="a" style="left:82.6px;top:0;width:10.2px;height:100%;background:#555"></div><div class="a" style="left:2.2px;top:3.0475px;width:6px;height:4.905px;background:#2b2b2b"></div><div class="a" style="left:84.6px;top:3.0475px;width:6px;height:4.905px;background:#2b2b2b"></div><div class="a" style="left:2.2px;top:12.0475px;width:6px;height:4.905px;background:#2b2b2b"></div><div class="a" style="left:84.6px;top:12.0475px;width:6px;height:4.905px;background:#2b2b2b"></div><div class="a" style="left:2.2px;top:21.0475px;width:6px;height:4.905px;background:#2b2b2b"></div><div class="a" style="left:84.6px;top:21.0475px;width:6px;height:4.905px;background:#2b2b2b"></div><div class="a" style="left:2.2px;top:30.0475px;width:6px;height:4.905px;background:#2b2b2b"></div><div class="a" style="left:84.6px;top:30.0475px;width:6px;height:4.905px;background:#2b2b2b"></div><div class="a" style="left:2.2px;top:39.0475px;width:6px;height:4.905px;background:#2b2b2b"></div><div class="a" style="left:84.6px;top:39.0475px;width:6px;height:4.905px;background:#2b2b2b"></div><div class="a" style="left:2.2px;top:48.0475px;width:6px;height:4.905px;background:#2b2b2b"></div><div class="a" style="left:84.6px;top:48.0475px;width:6px;height:4.905px;background:#2b2b2b"></div><div class="a" style="left:10.5px;top:3px;width:71.8px;height:50px;overflow:hidden;background:#888"><div class="a" style="left:0px;top:0px;width:72px;height:50px;background:#6a6a6a;"></div><div class="a" style="left:0px;top:44px;width:72px;height:3px;background:linear-gradient(90deg,#3a3a3a,#8a8a8a 50%,#5a5a5a);"></div></div></div>
<div class="a" style="left:418px;top:-12.5px;width:21.2px;height:21px;border-radius:2px;background:#f6d517"></div>
<div class="a" style="left:423.2px;top:-10.5px;width:10.6px;height:10.6px;border-radius:50%;background:#fffdf0"></div>
<svg style="left:427.1px;top:-7.9px" width="5" height="6" viewBox="0 0 5 6"><path d="M0 0L4.6 2.7L0 5.4Z" fill="#c6c628"/></svg>
<span class="a" style="left:418.4px;top:1.5px;width:21.2px;text-align:center;font-size:5.3px;line-height:6px;font-weight:bold;color:#3d3000;letter-spacing:-0.1px">Player</span>
<div class="fn" style="left:338px;top:10.4px">6fbed07a0d6823b<br>6b6161a698fb1a4<br>9fb747488d7687a<br>5a52fdc58a0e3...</div>
<svg style="left:468.75px;top:-80.5px" width="62.5" height="84" viewBox="0 0 62.5 84"><path d="M0 0H44.5L62.5 18.3V84H0Z" fill="#fafafa"/><path d="M44.5 0V18.3H62.5Z" fill="#efefef"/><path d="M44.8 1V18H61.5" stroke="#cdcdcd" stroke-width="0.7" fill="none"/></svg>
<div class="fn" style="left:446px;top:10.4px">7dd1ae3ce380f1b<br>5392651bf7947d1<br>e81f390375cbea2<br>5b4fc8eb256fa9...</div>
<div class="a" style="left:561.25px;top:-50.5px;width:92.75px;height:56px;background:#2e2e2e;overflow:hidden"><div class="a" style="left:0;top:0;width:10.2px;height:100%;background:#555"></div><div class="a" style="left:82.6px;top:0;width:10.2px;height:100%;background:#555"></div><div class="a" style="left:2.2px;top:3.0475px;width:6px;height:4.905px;background:#2b2b2b"></div><div class="a" style="left:84.6px;top:3.0475px;width:6px;height:4.905px;background:#2b2b2b"></div><div class="a" style="left:2.2px;top:12.0475px;width:6px;height:4.905px;background:#2b2b2b"></div><div class="a" style="left:84.6px;top:12.0475px;width:6px;height:4.905px;background:#2b2b2b"></div><div class="a" style="left:2.2px;top:21.0475px;width:6px;height:4.905px;background:#2b2b2b"></div><div class="a" style="left:84.6px;top:21.0475px;width:6px;height:4.905px;background:#2b2b2b"></div><div class="a" style="left:2.2px;top:30.0475px;width:6px;height:4.905px;background:#2b2b2b"></div><div class="a" style="left:84.6px;top:30.0475px;width:6px;height:4.905px;background:#2b2b2b"></div><div class="a" style="left:2.2px;top:39.0475px;width:6px;height:4.905px;background:#2b2b2b"></div><div class="a" style="left:84.6px;top:39.0475px;width:6px;height:4.905px;background:#2b2b2b"></div><div class="a" style="left:2.2px;top:48.0475px;width:6px;height:4.905px;background:#2b2b2b"></div><div class="a" style="left:84.6px;top:48.0475px;width:6px;height:4.905px;background:#2b2b2b"></div><div class="a" style="left:10.5px;top:3px;width:71.8px;height:50px;overflow:hidden;background:#888"><div class="a" style="left:0px;top:0px;width:36px;height:50px;background:#c8621a;"></div><div class="a" style="left:36px;top:0px;width:36px;height:50px;background:#2a5aa8;"></div></div></div>
<div class="a" style="left:634px;top:-12.5px;width:21.2px;height:21px;border-radius:2px;background:#f6d517"></div>
<div class="a" style="left:639.2px;top:-10.5px;width:10.6px;height:10.6px;border-radius:50%;background:#fffdf0"></div>
<svg style="left:643.1px;top:-7.9px" width="5" height="6" viewBox="0 0 5 6"><path d="M0 0L4.6 2.7L0 5.4Z" fill="#c6c628"/></svg>
<span class="a" style="left:634.4px;top:1.5px;width:21.2px;text-align:center;font-size:5.3px;line-height:6px;font-weight:bold;color:#3d3000;letter-spacing:-0.1px">Player</span>
<div class="fn" style="left:554px;top:10.4px">7dd1ae3ce380f1b<br>5392651bf7947d1<br>e81f390375cbea2<br>5b4fc8eb256fa9...</div>
<svg style="left:684.75px;top:-80.5px" width="62.5" height="84" viewBox="0 0 62.5 84"><path d="M0 0H44.5L62.5 18.3V84H0Z" fill="#fafafa"/><path d="M44.5 0V18.3H62.5Z" fill="#efefef"/><path d="M44.8 1V18H61.5" stroke="#cdcdcd" stroke-width="0.7" fill="none"/></svg>
<div class="fn" style="left:662px;top:10.4px">7e1edc775c81a08<br>0df282065413cd2<br>e208dcb1983a2d<br>157f590696d81...</div>
<div class="a" style="left:777.25px;top:-50.5px;width:92.75px;height:56px;background:#2e2e2e;overflow:hidden"><div class="a" style="left:0;top:0;width:10.2px;height:100%;background:#555"></div><div class="a" style="left:82.6px;top:0;width:10.2px;height:100%;background:#555"></div><div class="a" style="left:2.2px;top:3.0475px;width:6px;height:4.905px;background:#2b2b2b"></div><div class="a" style="left:84.6px;top:3.0475px;width:6px;height:4.905px;background:#2b2b2b"></div><div class="a" style="left:2.2px;top:12.0475px;width:6px;height:4.905px;background:#2b2b2b"></div><div class="a" style="left:84.6px;top:12.0475px;width:6px;height:4.905px;background:#2b2b2b"></div><div class="a" style="left:2.2px;top:21.0475px;width:6px;height:4.905px;background:#2b2b2b"></div><div class="a" style="left:84.6px;top:21.0475px;width:6px;height:4.905px;background:#2b2b2b"></div><div class="a" style="left:2.2px;top:30.0475px;width:6px;height:4.905px;background:#2b2b2b"></div><div class="a" style="left:84.6px;top:30.0475px;width:6px;height:4.905px;background:#2b2b2b"></div><div class="a" style="left:2.2px;top:39.0475px;width:6px;height:4.905px;background:#2b2b2b"></div><div class="a" style="left:84.6px;top:39.0475px;width:6px;height:4.905px;background:#2b2b2b"></div><div class="a" style="left:2.2px;top:48.0475px;width:6px;height:4.905px;background:#2b2b2b"></div><div class="a" style="left:84.6px;top:48.0475px;width:6px;height:4.905px;background:#2b2b2b"></div><div class="a" style="left:10.5px;top:3px;width:71.8px;height:50px;overflow:hidden;background:#888"><div class="a" style="left:0px;top:0px;width:72px;height:50px;background:#050505;"></div><div class="a" style="left:56px;top:44px;width:16px;height:6px;background:#d0d0d0;"></div></div></div>
<div class="a" style="left:850px;top:-12.5px;width:21.2px;height:21px;border-radius:2px;background:#f6d517"></div>
<div class="a" style="left:855.2px;top:-10.5px;width:10.6px;height:10.6px;border-radius:50%;background:#fffdf0"></div>
<svg style="left:859.1px;top:-7.9px" width="5" height="6" viewBox="0 0 5 6"><path d="M0 0L4.6 2.7L0 5.4Z" fill="#c6c628"/></svg>
<span class="a" style="left:850.4px;top:1.5px;width:21.2px;text-align:center;font-size:5.3px;line-height:6px;font-weight:bold;color:#3d3000;letter-spacing:-0.1px">Player</span>
<div class="fn" style="left:770px;top:10.4px">7e1edc775c81a08<br>0df282065413cd2<br>e208dcb1983a2d<br>157f590696d81...</div>
<svg style="left:36.75px;top:81.5px" width="62.5" height="84" viewBox="0 0 62.5 84"><path d="M0 0H44.5L62.5 18.3V84H0Z" fill="#fafafa"/><path d="M44.5 0V18.3H62.5Z" fill="#efefef"/><path d="M44.8 1V18H61.5" stroke="#cdcdcd" stroke-width="0.7" fill="none"/></svg>
<div class="fn" style="left:14px;top:172.4px">08d8fa907aed73a<br>372a0d96980157b<br>eb7d7e8f964ae23<br>3fbba24d2ca3a...</div>
<div class="a" style="left:129.25px;top:111.5px;width:92.75px;height:56px;background:#2e2e2e;overflow:hidden"><div class="a" style="left:0;top:0;width:10.2px;height:100%;background:#555"></div><div class="a" style="left:82.6px;top:0;width:10.2px;height:100%;background:#555"></div><div class="a" style="left:2.2px;top:3.0475px;width:6px;height:4.905px;background:#2b2b2b"></div><div class="a" style="left:84.6px;top:3.0475px;width:6px;height:4.905px;background:#2b2b2b"></div><div class="a" style="left:2.2px;top:12.0475px;width:6px;height:4.905px;background:#2b2b2b"></div><div class="a" style="left:84.6px;top:12.0475px;width:6px;height:4.905px;background:#2b2b2b"></div><div class="a" style="left:2.2px;top:21.0475px;width:6px;height:4.905px;background:#2b2b2b"></div><div class="a" style="left:84.6px;top:21.0475px;width:6px;height:4.905px;background:#2b2b2b"></div><div class="a" style="left:2.2px;top:30.0475px;width:6px;height:4.905px;background:#2b2b2b"></div><div class="a" style="left:84.6px;top:30.0475px;width:6px;height:4.905px;background:#2b2b2b"></div><div class="a" style="left:2.2px;top:39.0475px;width:6px;height:4.905px;background:#2b2b2b"></div><div class="a" style="left:84.6px;top:39.0475px;width:6px;height:4.905px;background:#2b2b2b"></div><div class="a" style="left:2.2px;top:48.0475px;width:6px;height:4.905px;background:#2b2b2b"></div><div class="a" style="left:84.6px;top:48.0475px;width:6px;height:4.905px;background:#2b2b2b"></div><div class="a" style="left:10.5px;top:3px;width:71.8px;height:50px;overflow:hidden;background:#888"><div class="a" style="left:0px;top:0px;width:72px;height:50px;background:linear-gradient(180deg,#d985b0 0%,#c0689c 14%,#ad558a 100%);"></div><div class="a" style="left:3.5px;top:5px;width:62.5px;height:40px;background:linear-gradient(100deg,#55702a 0%,#74822f 25%,#4a7426 55%,#3c6a20 100%);transform:rotate(-1.2deg)"></div><div class="a" style="left:5px;top:9px;width:26px;height:10px;background:rgba(190,180,90,0.55);filter:blur(2px)"></div><div class="a" style="left:4px;top:22px;width:12px;height:6px;background:#2f4f6a;filter:blur(1px)"></div><div class="a" style="left:17px;top:24px;width:10px;height:16px;background:rgba(150,140,120,0.7);filter:blur(1.5px)"></div><div class="a" style="left:44px;top:24px;width:12px;height:7px;background:#eef0c0;clip-path:polygon(50% 0,100% 100%,0 100%)"></div><div class="a" style="left:20px;top:2px;width:4px;height:1px;background:#8a3f70;"></div><div class="a" style="left:33px;top:0.5px;width:4px;height:1.2px;background:#6a5a9a;"></div></div></div>
<div class="a" style="left:202px;top:149.5px;width:21.2px;height:21px;border-radius:2px;background:#f6d517"></div>
<div class="a" style="left:207.2px;top:151.5px;width:10.6px;height:10.6px;border-radius:50%;background:#fffdf0"></div>
<svg style="left:211.1px;top:154.1px" width="5" height="6" viewBox="0 0 5 6"><path d="M0 0L4.6 2.7L0 5.4Z" fill="#c6c628"/></svg>
<span class="a" style="left:202.4px;top:163.5px;width:21.2px;text-align:center;font-size:5.3px;line-height:6px;font-weight:bold;color:#3d3000;letter-spacing:-0.1px">Player</span>
<div class="fn" style="left:122px;top:172.4px">08d8fa907aed73a<br>372a0d96980157b<br>eb7d7e8f964ae23<br>3fbba24d2ca3a...</div>
<svg style="left:252.75px;top:81.5px" width="62.5" height="84" viewBox="0 0 62.5 84"><path d="M0 0H44.5L62.5 18.3V84H0Z" fill="#fafafa"/><path d="M44.5 0V18.3H62.5Z" fill="#efefef"/><path d="M44.8 1V18H61.5" stroke="#cdcdcd" stroke-width="0.7" fill="none"/></svg>
<div class="fn" style="left:230px;top:172.4px">8b5eb7ebc7770d<br>22a3498abd77518<br>41dda30207fb651<br>b8e5fb4603908...</div>
<div class="a" style="left:345.25px;top:111.5px;width:92.75px;height:56px;background:#2e2e2e;overflow:hidden"><div class="a" style="left:0;top:0;width:10.2px;height:100%;background:#555"></div><div class="a" style="left:82.6px;top:0;width:10.2px;height:100%;background:#555"></div><div class="a" style="left:2.2px;top:3.0475px;width:6px;height:4.905px;background:#2b2b2b"></div><div class="a" style="left:84.6px;top:3.0475px;width:6px;height:4.905px;background:#2b2b2b"></div><div class="a" style="left:2.2px;top:12.0475px;width:6px;height:4.905px;background:#2b2b2b"></div><div class="a" style="left:84.6px;top:12.0475px;width:6px;height:4.905px;background:#2b2b2b"></div><div class="a" style="left:2.2px;top:21.0475px;width:6px;height:4.905px;background:#2b2b2b"></div><div class="a" style="left:84.6px;top:21.0475px;width:6px;height:4.905px;background:#2b2b2b"></div><div class="a" style="left:2.2px;top:30.0475px;width:6px;height:4.905px;background:#2b2b2b"></div><div class="a" style="left:84.6px;top:30.0475px;width:6px;height:4.905px;background:#2b2b2b"></div><div class="a" style="left:2.2px;top:39.0475px;width:6px;height:4.905px;background:#2b2b2b"></div><div class="a" style="left:84.6px;top:39.0475px;width:6px;height:4.905px;background:#2b2b2b"></div><div class="a" style="left:2.2px;top:48.0475px;width:6px;height:4.905px;background:#2b2b2b"></div><div class="a" style="left:84.6px;top:48.0475px;width:6px;height:4.905px;background:#2b2b2b"></div><div class="a" style="left:10.5px;top:3px;width:71.8px;height:50px;overflow:hidden;background:#888"><div class="a" style="left:0px;top:0px;width:72px;height:50px;background:linear-gradient(180deg,#92cfd0 0%,#b5dccf 30%,#e4e3bf 55%,#98d2cc 80%,#6cc0c8 100%);"></div><div class="a" style="left:26px;top:12px;width:20px;height:22px;background:rgba(243,232,180,0.9);border-radius:50%;filter:blur(3px)"></div><div class="a" style="left:-5px;top:-5px;width:21px;height:32px;background:rgba(246,232,228,0.95);border-radius:45%;filter:blur(2.5px)"></div><div class="a" style="left:2px;top:24px;width:22px;height:20px;background:rgba(246,230,226,0.9);border-radius:50%;filter:blur(2.5px)"></div><div class="a" style="left:50px;top:-4px;width:26px;height:30px;background:rgba(247,234,230,0.95);border-radius:45%;filter:blur(2.5px)"></div><div class="a" style="left:40px;top:22px;width:30px;height:18px;background:rgba(245,230,226,0.9);border-radius:50%;filter:blur(2.5px)"></div><div class="a" style="left:18px;top:30px;width:26px;height:12px;background:rgba(245,228,220,0.85);border-radius:50%;filter:blur(2.5px)"></div><div class="a" style="left:31px;top:1px;width:8px;height:6px;background:rgba(246,236,230,0.7);border-radius:50%;filter:blur(2px)"></div><div class="a" style="left:1px;top:14px;width:5px;height:13px;background:rgba(40,60,85,0.8);filter:blur(0.9px);transform:rotate(12deg)"></div><div class="a" style="left:15px;top:5px;width:3px;height:10px;background:rgba(50,60,70,0.65);filter:blur(0.9px);transform:rotate(18deg)"></div><div class="a" style="left:57px;top:4px;width:7px;height:3px;background:rgba(40,40,50,0.7);filter:blur(0.9px);transform:rotate(-20deg)"></div><div class="a" style="left:61px;top:14px;width:4px;height:4px;background:rgba(40,40,60,0.6);filter:blur(0.9px)"></div><div class="a" style="left:48px;top:43px;width:11px;height:6px;background:#8a2838;border-radius:40%;filter:blur(0.8px)"></div><div class="a" style="left:44px;top:38px;width:3px;height:6px;background:rgba(40,60,60,0.75);filter:blur(0.8px)"></div><div class="a" style="left:60px;top:36px;width:5px;height:4px;background:rgba(60,50,60,0.6);filter:blur(0.8px)"></div></div></div>
<div class="a" style="left:418px;top:149.5px;width:21.2px;height:21px;border-radius:2px;background:#f6d517"></div>
<div class="a" style="left:423.2px;top:151.5px;width:10.6px;height:10.6px;border-radius:50%;background:#fffdf0"></div>
<svg style="left:427.1px;top:154.1px" width="5" height="6" viewBox="0 0 5 6"><path d="M0 0L4.6 2.7L0 5.4Z" fill="#c6c628"/></svg>
<span class="a" style="left:418.4px;top:163.5px;width:21.2px;text-align:center;font-size:5.3px;line-height:6px;font-weight:bold;color:#3d3000;letter-spacing:-0.1px">Player</span>
<div class="fn" style="left:338px;top:172.4px">8b5eb7ebc7770d<br>22a3498abd77518<br>41dda30207fb651<br>b8e5fb4603908...</div>
<svg style="left:468.75px;top:81.5px" width="62.5" height="84" viewBox="0 0 62.5 84"><path d="M0 0H44.5L62.5 18.3V84H0Z" fill="#fafafa"/><path d="M44.5 0V18.3H62.5Z" fill="#efefef"/><path d="M44.8 1V18H61.5" stroke="#cdcdcd" stroke-width="0.7" fill="none"/></svg>
<div class="fn" style="left:446px;top:172.4px">9aae24302efb088<br>a02520340b35d15<br>9cbade3ac1eb4a<br>45ee682ed8e20...</div>
<div class="a" style="left:561.25px;top:139.5px;width:92.75px;height:29.4px;background:#2e2e2e;overflow:hidden"><div class="a" style="left:0;top:0;width:10.2px;height:100%;background:#555"></div><div class="a" style="left:82.6px;top:0;width:10.2px;height:100%;background:#555"></div><div class="a" style="left:2.2px;top:2.03892px;width:6px;height:2.48883px;background:#2b2b2b"></div><div class="a" style="left:84.6px;top:2.03892px;width:6px;height:2.48883px;background:#2b2b2b"></div><div class="a" style="left:2.2px;top:6.60558px;width:6px;height:2.48883px;background:#2b2b2b"></div><div class="a" style="left:84.6px;top:6.60558px;width:6px;height:2.48883px;background:#2b2b2b"></div><div class="a" style="left:2.2px;top:11.1723px;width:6px;height:2.48883px;background:#2b2b2b"></div><div class="a" style="left:84.6px;top:11.1723px;width:6px;height:2.48883px;background:#2b2b2b"></div><div class="a" style="left:2.2px;top:15.7389px;width:6px;height:2.48883px;background:#2b2b2b"></div><div class="a" style="left:84.6px;top:15.7389px;width:6px;height:2.48883px;background:#2b2b2b"></div><div class="a" style="left:2.2px;top:20.3056px;width:6px;height:2.48883px;background:#2b2b2b"></div><div class="a" style="left:84.6px;top:20.3056px;width:6px;height:2.48883px;background:#2b2b2b"></div><div class="a" style="left:2.2px;top:24.8722px;width:6px;height:2.48883px;background:#2b2b2b"></div><div class="a" style="left:84.6px;top:24.8722px;width:6px;height:2.48883px;background:#2b2b2b"></div><div class="a" style="left:10.5px;top:2.6px;width:71.8px;height:25.2px;overflow:hidden;background:#888"><div class="a" style="left:0px;top:0px;width:72px;height:26px;background:#000;"></div><div class="a" style="left:0px;top:1.2px;width:72px;height:25px;background:linear-gradient(180deg,#f1f1f6 0%,#e4e4ee 100%);"></div><div class="a" style="left:6px;top:6px;width:10px;height:11px;background:#2c3f86;border-radius:50% 50% 45% 45%;filter:blur(0.7px)"></div><div class="a" style="left:14px;top:3.5px;width:1.3px;height:6px;background:#27305a;transform:rotate(30deg)"></div><div class="a" style="left:56px;top:6px;width:10px;height:11px;background:#2c3f86;border-radius:50% 50% 45% 45%;filter:blur(0.7px)"></div><div class="a" style="left:65px;top:3.5px;width:1.3px;height:6px;background:#27305a;transform:rotate(30deg)"></div><div class="a" style="left:2px;top:17.5px;width:23px;height:1.3px;background:#d98a8a;"></div><div class="a" style="left:3px;top:20px;width:21px;height:1.3px;background:#9a9ab8;"></div><div class="a" style="left:47px;top:17.5px;width:20px;height:1.3px;background:#d98a8a;"></div><div class="a" style="left:48px;top:20px;width:18px;height:1.3px;background:#9a9ab8;"></div><div class="a" style="left:20px;top:10px;width:5px;height:4px;background:rgba(150,170,230,0.6);border-radius:50%"></div></div></div>
<div class="a" style="left:634px;top:149.5px;width:21.2px;height:21px;border-radius:2px;background:#f6d517"></div>
<div class="a" style="left:639.2px;top:151.5px;width:10.6px;height:10.6px;border-radius:50%;background:#fffdf0"></div>
<svg style="left:643.1px;top:154.1px" width="5" height="6" viewBox="0 0 5 6"><path d="M0 0L4.6 2.7L0 5.4Z" fill="#c6c628"/></svg>
<span class="a" style="left:634.4px;top:163.5px;width:21.2px;text-align:center;font-size:5.3px;line-height:6px;font-weight:bold;color:#3d3000;letter-spacing:-0.1px">Player</span>
<div class="fn" style="left:554px;top:172.4px">9aae24302efb088<br>a02520340b35d15<br>9cbade3ac1eb4a<br>45ee682ed8e20...</div>
<svg style="left:684.75px;top:81.5px" width="62.5" height="84" viewBox="0 0 62.5 84"><path d="M0 0H44.5L62.5 18.3V84H0Z" fill="#fafafa"/><path d="M44.5 0V18.3H62.5Z" fill="#efefef"/><path d="M44.8 1V18H61.5" stroke="#cdcdcd" stroke-width="0.7" fill="none"/></svg>
<div class="fn" style="left:662px;top:172.4px">9e5af2e4d912de1<br>7b2863dacfa20f5<br>8a495c8c55da9b<br>b312ed83031e0...</div>
<div class="a" style="left:777.25px;top:111.5px;width:92.75px;height:56px;background:#2e2e2e;overflow:hidden"><div class="a" style="left:0;top:0;width:10.2px;height:100%;background:#555"></div><div class="a" style="left:82.6px;top:0;width:10.2px;height:100%;background:#555"></div><div class="a" style="left:2.2px;top:3.0475px;width:6px;height:4.905px;background:#2b2b2b"></div><div class="a" style="left:84.6px;top:3.0475px;width:6px;height:4.905px;background:#2b2b2b"></div><div class="a" style="left:2.2px;top:12.0475px;width:6px;height:4.905px;background:#2b2b2b"></div><div class="a" style="left:84.6px;top:12.0475px;width:6px;height:4.905px;background:#2b2b2b"></div><div class="a" style="left:2.2px;top:21.0475px;width:6px;height:4.905px;background:#2b2b2b"></div><div class="a" style="left:84.6px;top:21.0475px;width:6px;height:4.905px;background:#2b2b2b"></div><div class="a" style="left:2.2px;top:30.0475px;width:6px;height:4.905px;background:#2b2b2b"></div><div class="a" style="left:84.6px;top:30.0475px;width:6px;height:4.905px;background:#2b2b2b"></div><div class="a" style="left:2.2px;top:39.0475px;width:6px;height:4.905px;background:#2b2b2b"></div><div class="a" style="left:84.6px;top:39.0475px;width:6px;height:4.905px;background:#2b2b2b"></div><div class="a" style="left:2.2px;top:48.0475px;width:6px;height:4.905px;background:#2b2b2b"></div><div class="a" style="left:84.6px;top:48.0475px;width:6px;height:4.905px;background:#2b2b2b"></div><div class="a" style="left:10.5px;top:3px;width:71.8px;height:50px;overflow:hidden;background:#888"><div class="a" style="left:0px;top:0px;width:72px;height:50px;background:linear-gradient(180deg,#c9d3cf 0%,#b6c6bb 30%,#84a17e 54%,#4b6d46 76%,#27332a 100%);"></div><div class="a" style="left:-3px;top:-2px;width:20px;height:38px;background:rgba(70,125,72,0.88);filter:blur(3px)"></div><div class="a" style="left:57px;top:16px;width:18px;height:20px;background:rgba(85,130,86,0.7);filter:blur(3px)"></div><div class="a" style="left:24px;top:22px;width:24px;height:12px;background:rgba(98,145,90,0.65);filter:blur(3px)"></div><div class="a" style="left:30px;top:5px;width:2.2px;height:24px;background:rgba(105,115,108,0.6);filter:blur(0.8px)"></div><div class="a" style="left:38px;top:8px;width:1.6px;height:16px;background:rgba(120,130,122,0.5);filter:blur(0.8px)"></div><div class="a" style="left:3px;top:20px;width:5px;height:5px;background:rgba(220,235,220,0.6);filter:blur(1.2px)"></div><div class="a" style="left:17px;top:26px;width:8px;height:9px;background:#5f5046;border-radius:50%;filter:blur(0.8px)"></div><div class="a" style="left:12px;top:35px;width:17px;height:15px;background:#94949c;border-radius:35% 35% 0 0;filter:blur(0.8px)"></div><div class="a" style="left:10px;top:40px;width:5px;height:10px;background:#2a3038;filter:blur(0.8px)"></div><div class="a" style="left:26px;top:37px;width:4px;height:13px;background:#2a3038;filter:blur(0.8px)"></div><div class="a" style="left:34px;top:31px;width:7px;height:8px;background:#b09078;border-radius:50%;filter:blur(0.8px)"></div><div class="a" style="left:32px;top:38px;width:12px;height:12px;background:#a87f7c;border-radius:35% 35% 0 0;filter:blur(0.8px)"></div><div class="a" style="left:55px;top:22px;width:7px;height:9px;background:#85634e;border-radius:50%;filter:blur(0.8px)"></div><div class="a" style="left:47px;top:31px;width:18px;height:12px;background:#854224;border-radius:40% 40% 0 0;filter:blur(0.8px)"></div><div class="a" style="left:53px;top:40px;width:10px;height:10px;background:#a89e72;filter:blur(0.8px)"></div></div></div>
<div class="a" style="left:850px;top:149.5px;width:21.2px;height:21px;border-radius:2px;background:#f6d517"></div>
<div class="a" style="left:855.2px;top:151.5px;width:10.6px;height:10.6px;border-radius:50%;background:#fffdf0"></div>
<svg style="left:859.1px;top:154.1px" width="5" height="6" viewBox="0 0 5 6"><path d="M0 0L4.6 2.7L0 5.4Z" fill="#c6c628"/></svg>
<span class="a" style="left:850.4px;top:163.5px;width:21.2px;text-align:center;font-size:5.3px;line-height:6px;font-weight:bold;color:#3d3000;letter-spacing:-0.1px">Player</span>
<div class="fn" style="left:770px;top:172.4px">9e5af2e4d912de1<br>7b2863dacfa20f5<br>8a495c8c55da9b<br>b312ed83031e0...</div>
<svg style="left:36.75px;top:243.5px" width="62.5" height="84" viewBox="0 0 62.5 84"><path d="M0 0H44.5L62.5 18.3V84H0Z" fill="#fafafa"/><path d="M44.5 0V18.3H62.5Z" fill="#efefef"/><path d="M44.8 1V18H61.5" stroke="#cdcdcd" stroke-width="0.7" fill="none"/></svg>
<div class="fn" style="left:14px;top:334.4px">9ed369a9f7fea1f5<br>391f388bf8e0353<br>59e8c0ef6652343<br>05273772382f3a...</div>
<div class="a" style="left:129.25px;top:273.5px;width:92.75px;height:56px;background:#2e2e2e;overflow:hidden"><div class="a" style="left:0;top:0;width:10.2px;height:100%;background:#555"></div><div class="a" style="left:82.6px;top:0;width:10.2px;height:100%;background:#555"></div><div class="a" style="left:2.2px;top:3.0475px;width:6px;height:4.905px;background:#2b2b2b"></div><div class="a" style="left:84.6px;top:3.0475px;width:6px;height:4.905px;background:#2b2b2b"></div><div class="a" style="left:2.2px;top:12.0475px;width:6px;height:4.905px;background:#2b2b2b"></div><div class="a" style="left:84.6px;top:12.0475px;width:6px;height:4.905px;background:#2b2b2b"></div><div class="a" style="left:2.2px;top:21.0475px;width:6px;height:4.905px;background:#2b2b2b"></div><div class="a" style="left:84.6px;top:21.0475px;width:6px;height:4.905px;background:#2b2b2b"></div><div class="a" style="left:2.2px;top:30.0475px;width:6px;height:4.905px;background:#2b2b2b"></div><div class="a" style="left:84.6px;top:30.0475px;width:6px;height:4.905px;background:#2b2b2b"></div><div class="a" style="left:2.2px;top:39.0475px;width:6px;height:4.905px;background:#2b2b2b"></div><div class="a" style="left:84.6px;top:39.0475px;width:6px;height:4.905px;background:#2b2b2b"></div><div class="a" style="left:2.2px;top:48.0475px;width:6px;height:4.905px;background:#2b2b2b"></div><div class="a" style="left:84.6px;top:48.0475px;width:6px;height:4.905px;background:#2b2b2b"></div><div class="a" style="left:10.5px;top:3px;width:71.8px;height:50px;overflow:hidden;background:#888"><div class="a" style="left:0px;top:0px;width:72px;height:50px;background:#1b1b1d;"></div><div class="a" style="left:0px;top:0px;width:72px;height:1.2px;background:#3a3a3a;"></div><div class="a" style="left:0px;top:47.5px;width:72px;height:1.5px;background:#4a4a4a;"></div><div class="a" style="left:4px;top:4px;width:65px;height:42px;background:linear-gradient(90deg,#262b50 0%,#222648 45%,#15171f 70%,#14151a 100%);"></div><div class="a" style="left:4px;top:30px;width:65px;height:16px;background:linear-gradient(180deg,rgba(20,30,20,0) 0%,#141c14 100%);"></div><div class="a" style="left:15px;top:9px;width:9px;height:7px;background:#e8222e;border-radius:30%;filter:blur(0.8px);transform:rotate(-15deg)"></div><div class="a" style="left:12px;top:17px;width:10px;height:2px;background:#c8c8c8;transform:rotate(-25deg);filter:blur(0.6px)"></div><div class="a" style="left:24.5px;top:25px;width:4px;height:6.5px;background:#f0e27a;filter:blur(0.6px)"></div><div class="a" style="left:8px;top:24px;width:3px;height:20px;background:rgba(150,160,120,0.6);filter:blur(1px)"></div><div class="a" style="left:43px;top:8px;width:22px;height:26px;background:rgba(8,8,10,0.8);filter:blur(2px)"></div><div class="a" style="left:56px;top:29px;width:10px;height:5px;background:rgba(110,120,90,0.6);filter:blur(1px)"></div><div class="a" style="left:1px;top:1.5px;width:4px;height:1.2px;background:#ddd;"></div><div class="a" style="left:8px;top:1.2px;width:6px;height:1.8px;background:#eee;"></div><div class="a" style="left:66px;top:1.5px;width:5px;height:1.2px;background:#ddd;"></div></div></div>
<div class="a" style="left:202px;top:311.5px;width:21.2px;height:21px;border-radius:2px;background:#f6d517"></div>
<div class="a" style="left:207.2px;top:313.5px;width:10.6px;height:10.6px;border-radius:50%;background:#fffdf0"></div>
<svg style="left:211.1px;top:316.1px" width="5" height="6" viewBox="0 0 5 6"><path d="M0 0L4.6 2.7L0 5.4Z" fill="#c6c628"/></svg>
<span class="a" style="left:202.4px;top:325.5px;width:21.2px;text-align:center;font-size:5.3px;line-height:6px;font-weight:bold;color:#3d3000;letter-spacing:-0.1px">Player</span>
<div class="fn" style="left:122px;top:334.4px">9ed369a9f7fea1f5<br>391f388bf8e0353<br>59e8c0ef6652343<br>05273772382f3a...</div>
<svg style="left:252.75px;top:243.5px" width="62.5" height="84" viewBox="0 0 62.5 84"><path d="M0 0H44.5L62.5 18.3V84H0Z" fill="#fafafa"/><path d="M44.5 0V18.3H62.5Z" fill="#efefef"/><path d="M44.8 1V18H61.5" stroke="#cdcdcd" stroke-width="0.7" fill="none"/></svg>
<div class="fn" style="left:230px;top:334.4px">21e5e6171001718<br>707f569ac910bee<br>8c05ee3b02f905b<br>149f59a6b1c67...</div>
<div class="a" style="left:345.25px;top:273.5px;width:92.75px;height:56px;background:#2e2e2e;overflow:hidden"><div class="a" style="left:0;top:0;width:10.2px;height:100%;background:#555"></div><div class="a" style="left:82.6px;top:0;width:10.2px;height:100%;background:#555"></div><div class="a" style="left:2.2px;top:3.0475px;width:6px;height:4.905px;background:#2b2b2b"></div><div class="a" style="left:84.6px;top:3.0475px;width:6px;height:4.905px;background:#2b2b2b"></div><div class="a" style="left:2.2px;top:12.0475px;width:6px;height:4.905px;background:#2b2b2b"></div><div class="a" style="left:84.6px;top:12.0475px;width:6px;height:4.905px;background:#2b2b2b"></div><div class="a" style="left:2.2px;top:21.0475px;width:6px;height:4.905px;background:#2b2b2b"></div><div class="a" style="left:84.6px;top:21.0475px;width:6px;height:4.905px;background:#2b2b2b"></div><div class="a" style="left:2.2px;top:30.0475px;width:6px;height:4.905px;background:#2b2b2b"></div><div class="a" style="left:84.6px;top:30.0475px;width:6px;height:4.905px;background:#2b2b2b"></div><div class="a" style="left:2.2px;top:39.0475px;width:6px;height:4.905px;background:#2b2b2b"></div><div class="a" style="left:84.6px;top:39.0475px;width:6px;height:4.905px;background:#2b2b2b"></div><div class="a" style="left:2.2px;top:48.0475px;width:6px;height:4.905px;background:#2b2b2b"></div><div class="a" style="left:84.6px;top:48.0475px;width:6px;height:4.905px;background:#2b2b2b"></div><div class="a" style="left:10.5px;top:3px;width:71.8px;height:50px;overflow:hidden;background:#888"><div class="a" style="left:0px;top:0px;width:72px;height:50px;background:#fbfbfb;"></div><span class="a" style="left:0.5px;top:-0.6px;font-size:6.9px;line-height:8px;color:#9a9a9a;white-space:nowrap;letter-spacing:-0.15px">tendo <span style="color:#f0a23a">eShop</span></span><div class="a" style="left:33px;top:8.8px;width:38px;height:3.6px;background:#de3434;filter:blur(0.5px)"></div><div class="a" style="left:0.5px;top:16.3px;width:11.5px;height:10px;background:linear-gradient(135deg,#5ab3e8,#d8c86a);"></div><div class="a" style="left:13.2px;top:16.3px;width:22.2px;height:10px;background:linear-gradient(135deg,#4f7a3e,#c8a45a);"></div><div class="a" style="left:36.5px;top:16.3px;width:22.2px;height:10px;background:linear-gradient(135deg,#9fd8e8,#5a8ac8);"></div><div class="a" style="left:59.9px;top:16.3px;width:12px;height:10px;background:linear-gradient(135deg,#f2d21c,#e8c83a);"></div><div class="a" style="left:0.5px;top:28px;width:11.5px;height:10px;background:linear-gradient(135deg,#4f9a9a,#4a6a5a);"></div><div class="a" style="left:13.2px;top:28px;width:22.2px;height:10px;background:linear-gradient(135deg,#4fb0d8,#9a7a3a);"></div><div class="a" style="left:36.5px;top:28px;width:22.2px;height:10px;background:linear-gradient(135deg,#5aaae8,#3a5a9a);"></div><div class="a" style="left:59.9px;top:28px;width:12px;height:10px;background:linear-gradient(135deg,#6aaa7a,#4a7a5a);"></div><div class="a" style="left:0.5px;top:39.6px;width:11.5px;height:10px;background:linear-gradient(135deg,#e8c0a8,#c8584a);"></div><div class="a" style="left:13.2px;top:39.6px;width:22.2px;height:10px;background:linear-gradient(135deg,#8ad0e8,#c8681a);"></div><div class="a" style="left:36.5px;top:39.6px;width:22.2px;height:10px;background:linear-gradient(135deg,#f2dcb8,#e89a5a);"></div><div class="a" style="left:59.9px;top:39.6px;width:12px;height:10px;background:linear-gradient(135deg,#e8e8d8,#c8d8c8);"></div><div class="a" style="left:0px;top:16px;width:72px;height:34px;background:rgba(255,255,255,0.16);"></div></div></div>
<div class="a" style="left:418px;top:311.5px;width:21.2px;height:21px;border-radius:2px;background:#f6d517"></div>
<div class="a" style="left:423.2px;top:313.5px;width:10.6px;height:10.6px;border-radius:50%;background:#fffdf0"></div>
<svg style="left:427.1px;top:316.1px" width="5" height="6" viewBox="0 0 5 6"><path d="M0 0L4.6 2.7L0 5.4Z" fill="#c6c628"/></svg>
<span class="a" style="left:418.4px;top:325.5px;width:21.2px;text-align:center;font-size:5.3px;line-height:6px;font-weight:bold;color:#3d3000;letter-spacing:-0.1px">Player</span>
<div class="fn" style="left:338px;top:334.4px">21e5e6171001718<br>707f569ac910bee<br>8c05ee3b02f905b<br>149f59a6b1c67...</div>
<svg style="left:468.75px;top:243.5px" width="62.5" height="84" viewBox="0 0 62.5 84"><path d="M0 0H44.5L62.5 18.3V84H0Z" fill="#fafafa"/><path d="M44.5 0V18.3H62.5Z" fill="#efefef"/><path d="M44.8 1V18H61.5" stroke="#cdcdcd" stroke-width="0.7" fill="none"/></svg>
<div class="fn" style="left:446px;top:334.4px">29ee25be518fa6d<br>7758f9aba64916f<br>cf4160c8816921cf<br>8daf059ba9afef...</div>
<div class="a" style="left:561.25px;top:273.5px;width:92.75px;height:56px;background:#2e2e2e;overflow:hidden"><div class="a" style="left:0;top:0;width:10.2px;height:100%;background:#555"></div><div class="a" style="left:82.6px;top:0;width:10.2px;height:100%;background:#555"></div><div class="a" style="left:2.2px;top:3.0475px;width:6px;height:4.905px;background:#2b2b2b"></div><div class="a" style="left:84.6px;top:3.0475px;width:6px;height:4.905px;background:#2b2b2b"></div><div class="a" style="left:2.2px;top:12.0475px;width:6px;height:4.905px;background:#2b2b2b"></div><div class="a" style="left:84.6px;top:12.0475px;width:6px;height:4.905px;background:#2b2b2b"></div><div class="a" style="left:2.2px;top:21.0475px;width:6px;height:4.905px;background:#2b2b2b"></div><div class="a" style="left:84.6px;top:21.0475px;width:6px;height:4.905px;background:#2b2b2b"></div><div class="a" style="left:2.2px;top:30.0475px;width:6px;height:4.905px;background:#2b2b2b"></div><div class="a" style="left:84.6px;top:30.0475px;width:6px;height:4.905px;background:#2b2b2b"></div><div class="a" style="left:2.2px;top:39.0475px;width:6px;height:4.905px;background:#2b2b2b"></div><div class="a" style="left:84.6px;top:39.0475px;width:6px;height:4.905px;background:#2b2b2b"></div><div class="a" style="left:2.2px;top:48.0475px;width:6px;height:4.905px;background:#2b2b2b"></div><div class="a" style="left:84.6px;top:48.0475px;width:6px;height:4.905px;background:#2b2b2b"></div><div class="a" style="left:10.5px;top:3px;width:71.8px;height:50px;overflow:hidden;background:#888"><div class="a" style="left:0px;top:0px;width:36px;height:50px;background:linear-gradient(170deg,#f8cc1c 0%,#f4a818 35%,#e8641a 65%,#d84414 100%);"></div><div class="a" style="left:10px;top:8px;width:5px;height:36px;background:rgba(255,190,60,0.45);transform:rotate(28deg);filter:blur(1.5px)"></div><div class="a" style="left:36px;top:0px;width:36px;height:50px;background:linear-gradient(190deg,#3a8ae0 0%,#4672d4 40%,#3656c4 70%,#2468d0 100%);"></div><div class="a" style="left:50px;top:-4px;width:5px;height:50px;background:rgba(190,220,255,0.45);transform:rotate(-32deg);filter:blur(1.5px)"></div><div class="a" style="left:42px;top:4px;width:4px;height:40px;background:rgba(200,210,255,0.4);transform:rotate(-18deg);filter:blur(1.5px)"></div><div class="a" style="left:34px;top:0px;width:10px;height:26px;background:rgba(150,60,190,0.75);filter:blur(3px)"></div><div class="a" style="left:17px;top:-14px;width:40px;height:30px;background:radial-gradient(ellipse at 50% 40%,#ffffff 0%,#ffffff 38%,rgba(255,255,255,0) 70%);"></div><div class="a" style="left:38px;top:16px;width:34px;height:17px;background:rgba(235,240,255,0.9);border-radius:50%;filter:blur(4px);transform:rotate(-25deg)"></div><div class="a" style="left:2px;top:4px;width:26px;height:26px;background:rgba(250,215,60,0.55);border-radius:50%;filter:blur(4px)"></div><div class="a" style="left:48px;top:2px;width:16px;height:12px;background:rgba(40,150,230,0.7);filter:blur(3px)"></div></div></div>
<div class="a" style="left:634px;top:311.5px;width:21.2px;height:21px;border-radius:2px;background:#f6d517"></div>
<div class="a" style="left:639.2px;top:313.5px;width:10.6px;height:10.6px;border-radius:50%;background:#fffdf0"></div>
<svg style="left:643.1px;top:316.1px" width="5" height="6" viewBox="0 0 5 6"><path d="M0 0L4.6 2.7L0 5.4Z" fill="#c6c628"/></svg>
<span class="a" style="left:634.4px;top:325.5px;width:21.2px;text-align:center;font-size:5.3px;line-height:6px;font-weight:bold;color:#3d3000;letter-spacing:-0.1px">Player</span>
<div class="fn" style="left:554px;top:334.4px">29ee25be518fa6d<br>7758f9aba64916f<br>cf4160c8816921cf<br>8daf059ba9afef...</div>
<svg style="left:684.75px;top:243.5px" width="62.5" height="84" viewBox="0 0 62.5 84"><path d="M0 0H44.5L62.5 18.3V84H0Z" fill="#fafafa"/><path d="M44.5 0V18.3H62.5Z" fill="#efefef"/><path d="M44.8 1V18H61.5" stroke="#cdcdcd" stroke-width="0.7" fill="none"/></svg>
<div class="fn" style="left:662px;top:334.4px">44c1c6266005694<br>561ce4f8ba16edc<br>a4e6b1424941062<br>20cdf6755299df...</div>
<div class="a" style="left:777.25px;top:273.5px;width:92.75px;height:56px;background:#2e2e2e;overflow:hidden"><div class="a" style="left:0;top:0;width:10.2px;height:100%;background:#555"></div><div class="a" style="left:82.6px;top:0;width:10.2px;height:100%;background:#555"></div><div class="a" style="left:2.2px;top:3.0475px;width:6px;height:4.905px;background:#2b2b2b"></div><div class="a" style="left:84.6px;top:3.0475px;width:6px;height:4.905px;background:#2b2b2b"></div><div class="a" style="left:2.2px;top:12.0475px;width:6px;height:4.905px;background:#2b2b2b"></div><div class="a" style="left:84.6px;top:12.0475px;width:6px;height:4.905px;background:#2b2b2b"></div><div class="a" style="left:2.2px;top:21.0475px;width:6px;height:4.905px;background:#2b2b2b"></div><div class="a" style="left:84.6px;top:21.0475px;width:6px;height:4.905px;background:#2b2b2b"></div><div class="a" style="left:2.2px;top:30.0475px;width:6px;height:4.905px;background:#2b2b2b"></div><div class="a" style="left:84.6px;top:30.0475px;width:6px;height:4.905px;background:#2b2b2b"></div><div class="a" style="left:2.2px;top:39.0475px;width:6px;height:4.905px;background:#2b2b2b"></div><div class="a" style="left:84.6px;top:39.0475px;width:6px;height:4.905px;background:#2b2b2b"></div><div class="a" style="left:2.2px;top:48.0475px;width:6px;height:4.905px;background:#2b2b2b"></div><div class="a" style="left:84.6px;top:48.0475px;width:6px;height:4.905px;background:#2b2b2b"></div><div class="a" style="left:10.5px;top:3px;width:71.8px;height:50px;overflow:hidden;background:#888"><div class="a" style="left:0px;top:0px;width:72px;height:50px;background:#f2f2f2;"></div><div class="a" style="left:34px;top:0px;width:3px;height:0.9px;background:#333;"></div><div class="a" style="left:3.3px;top:4px;width:65.4px;height:39px;background:linear-gradient(180deg,#3b93e6 0%,#56aef0 70%,#6fc0f0 100%);"></div><div class="a" style="left:3.3px;top:38.5px;width:65.4px;height:4.5px;background:#3fc03a;"></div><div class="a" style="left:3.3px;top:42.3px;width:65.4px;height:1px;background:#8a5a2a;"></div><div class="a" style="left:46px;top:7px;width:14px;height:30px;background:#3fb040;border-radius:45% 45% 0 0;filter:blur(0.6px)"></div><div class="a" style="left:59px;top:20px;width:9px;height:18px;background:#48b848;border-radius:45% 45% 0 0;filter:blur(0.6px)"></div><div class="a" style="left:7px;top:19px;width:8px;height:18px;background:#3f8ab0;border-radius:40% 40% 0 0;filter:blur(0.6px)"></div><div class="a" style="left:15px;top:24px;width:3px;height:13px;background:#7fc0d8;filter:blur(0.6px)"></div><div class="a" style="left:4px;top:6px;width:9px;height:3.5px;background:#e6f2fb;border-radius:50%;filter:blur(0.6px)"></div><div class="a" style="left:40px;top:5px;width:18px;height:4px;background:#e6f2fb;border-radius:50%;filter:blur(0.8px)"></div><div class="a" style="left:12px;top:20px;width:6px;height:2.5px;background:#e6f2fb;border-radius:50%;filter:blur(0.6px)"></div><div class="a" style="left:27px;top:22px;width:14px;height:13px;background:#f0a04a;border-radius:50%;filter:blur(0.5px)"></div><div class="a" style="left:26px;top:17px;width:16px;height:8px;background:#6aa83a;border-radius:50% 50% 30% 30%;filter:blur(0.6px)"></div><div class="a" style="left:30px;top:10px;width:10px;height:8px;background:#5a3a7a;border-radius:40%;filter:blur(0.7px)"></div><div class="a" style="left:28px;top:32px;width:13px;height:5px;background:#8ad06a;border-radius:40%;filter:blur(0.6px)"></div><div class="a" style="left:19.5px;top:34.5px;width:2.4px;height:5px;background:#2a3a2a;"></div><div class="a" style="left:51.5px;top:35px;width:2.6px;height:4.5px;background:#a83a4a;"></div></div></div>
<div class="a" style="left:850px;top:311.5px;width:21.2px;height:21px;border-radius:2px;background:#f6d517"></div>
<div class="a" style="left:855.2px;top:313.5px;width:10.6px;height:10.6px;border-radius:50%;background:#fffdf0"></div>
<svg style="left:859.1px;top:316.1px" width="5" height="6" viewBox="0 0 5 6"><path d="M0 0L4.6 2.7L0 5.4Z" fill="#c6c628"/></svg>
<span class="a" style="left:850.4px;top:325.5px;width:21.2px;text-align:center;font-size:5.3px;line-height:6px;font-weight:bold;color:#3d3000;letter-spacing:-0.1px">Player</span>
<div class="fn" style="left:770px;top:334.4px">44c1c6266005694<br>561ce4f8ba16edc<br>a4e6b1424941062<br>20cdf6755299df...</div>
</div>
</body></html>
